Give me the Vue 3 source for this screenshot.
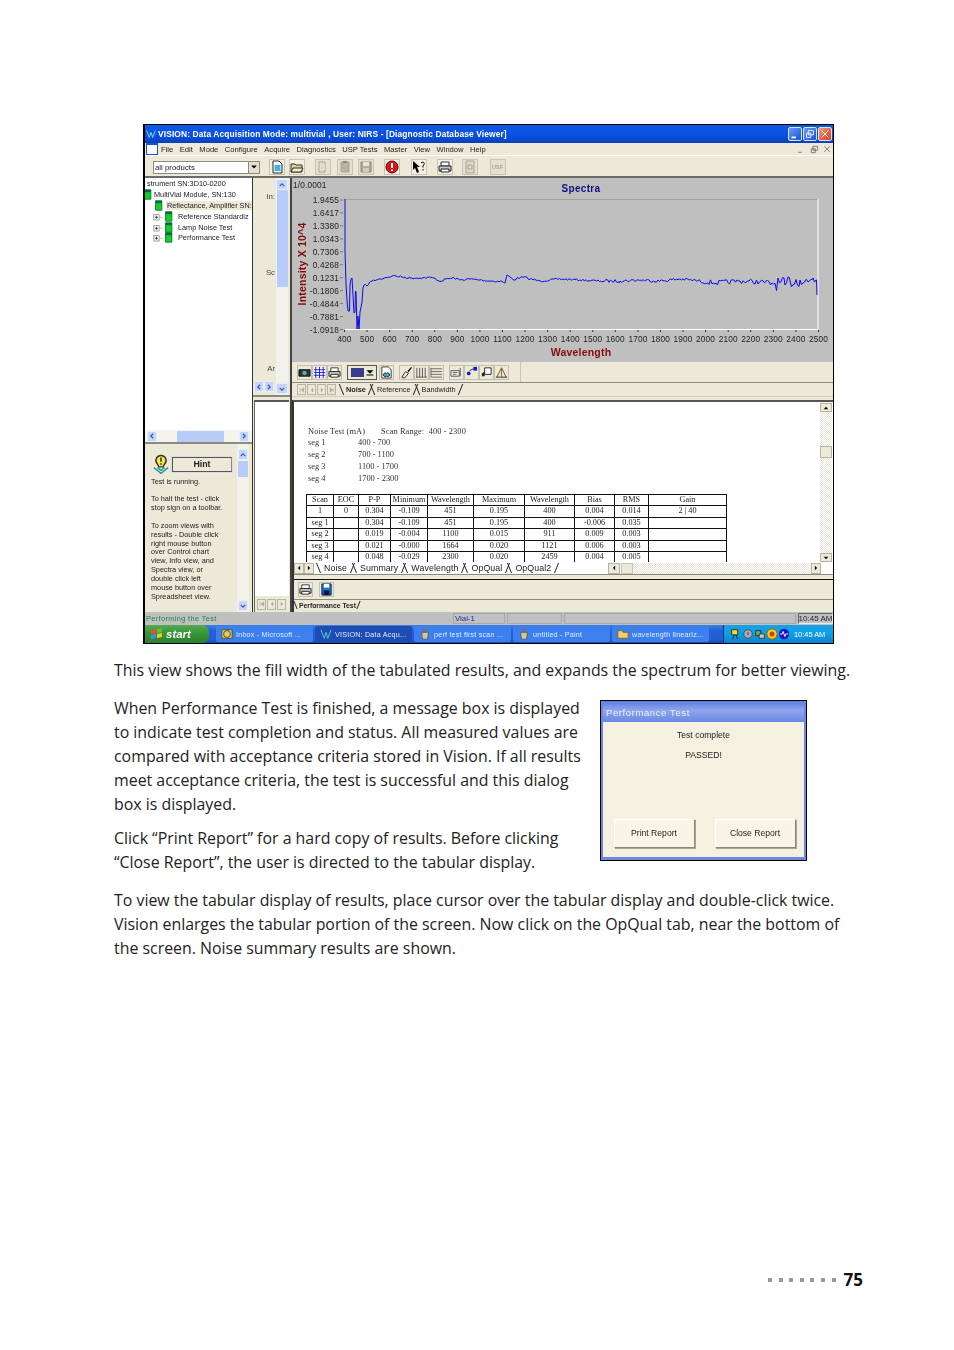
<template>
  <div class="page">
    <!-- screen capture -->
    <div class="shot">
      <div class="title">
        <Icon name="vlogo" class="title-logo" />
        <span class="title-text">VISION: Data Acquisition Mode: multivial , User: NIRS - [Diagnostic Database Viewer]</span>
        <span class="wbtn"><Icon name="min" /></span>
        <span class="wbtn"><Icon name="restore" /></span>
        <span class="wbtn close"><Icon name="x" /></span>
      </div>

      <div class="menu">
        <span class="menu-doc"></span>
        <span v-for="m in menus" :key="m" class="menu-item">{{ m }}</span>
        <span class="mdi">
          <Icon name="mdimin" /><Icon name="mdirest" /><Icon name="mdix" />
        </span>
      </div>

      <div class="toolbar">
        <div class="combo"><span>all products</span><i class="combo-btn"><Icon name="down" /></i></div>
        <div class="tgroup g1"><span v-for="t in ['doc', 'open']" :key="t" class="tb"><Icon :name="t" /></span></div>
        <div class="tgroup g2"><span v-for="t in ['copy', 'paste', 'save']" :key="t" class="tb off"><Icon :name="t" /></span></div>
        <div class="tgroup g3"><span v-for="t in ['stop', 'helpa', 'printer']" :key="t" class="tb"><Icon :name="t" /></span></div>
        <div class="tgroup g4"><span class="tb off"><Icon name="report" /></span><span class="tb off usf">USF</span></div>
      </div>

      <div class="body">
        <!-- left column -->
        <div class="left">
          <div class="tree">
            <div class="tree-row">strument SN:3D10-0200</div>
            <div class="tree-row r1"><Icon name="cyl" />MultiVial Module, SN:130</div>
            <div class="tree-row r2"><Icon name="cyl" /><span class="sel">Reflectance, Amplifier SN:</span></div>
            <div v-for="n in treeItems" :key="n" class="tree-row r3">
              <Icon name="plus" /><Icon name="cyl" />{{ n }}
            </div>
          </div>
          <div class="hscroll">
            <span class="sb"><Icon name="chevL" /></span>
            <span class="hthumb"></span>
            <span class="sb"><Icon name="chevR" /></span>
          </div>
          <div class="hint">
            <div class="hint-main">
              <div class="hint-top">
                <Icon name="bulb" class="bulb" />
                <span class="hint-btn">Hint</span>
              </div>
              <p>Test is running.</p>
              <p>To halt the test - click<br>stop sign on a toolbar.</p>
              <p>To zoom views with<br>results - Double click<br>right mouse button<br>over Control chart<br>view, Info view, and<br>Spectra view, or<br>double click left<br>mouse button over<br>Spreadsheet view.</p>
            </div>
            <div class="vbar">
              <span class="sb"><Icon name="chevU" /></span>
              <span class="vthumb"></span>
              <span class="sb end"><Icon name="chevD" /></span>
            </div>
          </div>
        </div>

        <!-- middle column -->
        <div class="mid">
          <div class="mid-top">
            <div class="mid-labels">
              <span class="l1">In:</span>
              <span class="l2">Sc</span>
              <span class="l3">Ar</span>
              <div class="mid-nav">
                <span class="sb"><Icon name="chevL" /></span>
                <span class="sb"><Icon name="chevR" /></span>
              </div>
            </div>
            <div class="vbar midbar">
              <span class="sb"><Icon name="chevU" /></span>
              <span class="midthumb"></span>
              <span class="sb end"><Icon name="chevD" /></span>
            </div>
          </div>
          <div class="mid-bottom">
            <div class="mid-white"></div>
            <div class="mid-foot">
              <span v-for="t in ['first', 'prev', 'next']" :key="t" class="nav"><Icon :name="t" /></span>
            </div>
          </div>
        </div>

        <!-- right column -->
        <div class="right">
          <div class="right-top">
            <svg class="chart" viewBox="292 178 541 184" width="541" height="184">
              <rect x="292" y="178" width="541" height="184" fill="#bfbfbf" />
              <path d="M345 199.5H818" fill="none" stroke="#a8a494" />
              <path d="M818 199V329.5H345" fill="none" stroke="#fff" />
              <path v-for="t in yTicks" :key="t.label" :d="`M340 ${t.y}h3`" stroke="#777" />
              <path v-for="t in xTicks" :key="t.label" :d="`M${t.x} 330v2`" stroke="#333" />
              <text x="293" y="188" class="ax">1/0.0001</text>
              <text x="581" y="192" class="ttl" text-anchor="middle">Spectra</text>
              <text v-for="t in yTicks" :key="t.label" x="339" :y="t.y + 3" class="ax" text-anchor="end">{{ t.label }}</text>
              <text v-for="t in xTicks" :key="t.label" :x="t.x" y="342" class="ax" text-anchor="middle">{{ t.label }}</text>
              <text x="581" y="356" class="axt" text-anchor="middle">Wavelength</text>
              <text x="306" y="264" class="axt" text-anchor="middle" transform="rotate(-90 306 264)">Intensity X 10^4</text>
              <path :d="curve" fill="none" stroke="#0a0af0" stroke-width="1" />
            </svg>
            <div class="chart-tools">
              <div class="tgroup c1"><span v-for="t in ['camera', 'gridb', 'printer']" :key="t" class="tb2"><Icon :name="t" /></span></div>
              <div class="swatch-box"><i class="swatch"></i><Icon name="downbar" /></div>
              <span class="tb2 c2"><Icon name="preview" /></span>
              <div class="tgroup c3"><span v-for="t in ['brush', 'vlines', 'hlines']" :key="t" class="tb2"><Icon :name="t" /></span></div>
              <div class="tgroup c4"><span v-for="t in ['label', 'dots', 'zoom', 'peak']" :key="t" class="tb2"><Icon :name="t" /></span></div>
            </div>
            <div class="tabs-row">
              <span v-for="t in ['first', 'prev', 'next', 'last']" :key="t" class="nav"><Icon :name="t" /></span>
              <div class="tabs small">
                <span class="tab on">Noise</span><span class="tab">Reference</span><span class="tab">Bandwidth</span>
              </div>
            </div>
          </div>

          <div class="right-bottom">
            <div class="sheet">
              <div class="sheet-main">
                <div class="noise-head"><span>Noise Test (mA)</span><span>Scan Range:&nbsp; 400 - 2300</span></div>
                <div v-for="s in segs" :key="s[0]" class="seg"><span>{{ s[0] }}</span><span>{{ s[1] }}</span></div>
                <table class="grid">
                  <colgroup>
                    <col v-for="(w, i) in colWidths" :key="i" :width="w" />
                  </colgroup>
                  <tbody>
                    <tr v-for="(row, i) in rows" :key="i">
                      <td v-for="(c, j) in row" :key="j">{{ c }}</td>
                    </tr>
                  </tbody>
                </table>
              </div>
              <div class="sheet-bar">
                <span class="sq"><Icon name="up" /></span>
                <span class="sheet-thumb"></span>
                <span class="sq end"><Icon name="down" /></span>
              </div>
            </div>
            <div class="sheet-tabs">
              <span class="mini"><Icon name="left" /></span>
              <span class="mini"><Icon name="right" /></span>
              <div class="tabs large">
                <span class="tab">Noise</span><span class="tab">Summary</span><span class="tab">Wavelength</span><span class="tab">OpQual</span><span class="tab">OpQual2</span>
              </div>
              <div class="sheet-hbar">
                <span class="mini wide"><Icon name="left" /></span>
                <span class="hbar-thumb"></span>
                <span class="hbar-track"></span>
                <span class="mini"><Icon name="right" /></span>
              </div>
            </div>
            <div class="rep-tools">
              <span class="tb2"><Icon name="printer" /></span>
              <span class="tb2"><Icon name="floppy" /></span>
            </div>
            <div class="rep-tabs">
              <div class="tabs small rep"><span class="tab on">Performance Test</span></div>
            </div>
          </div>
        </div>
      </div>

      <div class="status">
        <span class="status-msg">Performing the Test</span>
        <span class="cell vial">Vial-1</span>
        <span class="cell w55"></span>
        <span class="cell grow"></span>
        <span class="cell clock">10:45 AM</span>
      </div>

      <div class="taskbar">
        <div class="start"><Icon name="flag" /><span>start</span></div>
        <div class="tasks">
          <div v-for="t in tasks" :key="t.label" class="task" :class="{ active: t.active }">
            <Icon :name="t.icon" /><span>{{ t.label }}</span>
          </div>
        </div>
        <div class="tray">
          <Icon v-for="t in ['tr1', 'tr2', 'tr3', 'tr4', 'tr5']" :key="t" :name="t" />
          <span>10:45 AM</span>
        </div>
      </div>
    </div>

    <!-- manual text -->
    <div class="text">
      <p>This view shows the fill width of the tabulated results, and expands the spectrum for better viewing.</p>
      <div class="with-dialog">
        <div class="with-dialog-text">
          <p>When Performance Test is finished, a message box is displayed to indicate test completion and status. All measured values are compared with acceptance criteria stored in Vision. If all results meet acceptance criteria, the test is successful and this dialog box is displayed.</p>
          <p>Click “Print Report” for a hard copy of results. Before clicking “Close Report”, the user is directed to the tabular display.</p>
        </div>
        <div class="dialog">
          <div class="dialog-title">Performance Test</div>
          <div class="dialog-body">
            <div class="dialog-msg">Test complete</div>
            <div class="dialog-msg">PASSED!</div>
            <div class="dialog-btns">
              <span class="dbtn">Print Report</span>
              <span class="dbtn">Close Report</span>
            </div>
          </div>
        </div>
      </div>
      <p>To view the tabular display of results, place cursor over the tabular display and double-click twice. Vision enlarges the tabular portion of the screen. Now click on the OpQual tab, near the bottom of the screen. Noise summary results are shown.</p>
    </div>

    <div class="footer">
      <span class="dots"><i v-for="n in 7" :key="n"></i></span>
      <span class="pageno">75</span>
    </div>
  </div>
</template>

<script setup>
import { h } from 'vue'

// every icon is a list of [path, fill, stroke] on a 14x14 grid
const icons = {
  vlogo: [['M2 3l3 8 2-6 2 6 3-8', 'none', '#8ce8e0']],
  min: [['M3 10h5v2H3z', '#fff']],
  restore: [['M5 3h6v5H5zM3 6h5v5H3z', 'none', '#fff']],
  x: [['M3 3l8 8M11 3l-8 8', 'none', '#fff']],
  mdimin: [['M3 10h4v1H3z', '#666']],
  mdirest: [['M5 3h6v5H5zM3 6h5v5H3z', 'none', '#666']],
  mdix: [['M3 3l7 7M10 3l-7 7', 'none', '#666']],
  down: [['M3 5h8l-4 4z', '#000']],
  up: [['M3 9h8L7 5z', '#000']],
  left: [['M9 3v8L5 7z', '#000']],
  right: [['M5 3v8l4-4z', '#000']],
  downbar: [['M3 5h8l-4 4zM3 10h8v1H3z', '#000']],
  doc: [['M3 1h6l3 3v9H3z', '#fff', '#223'], ['M4.5 5h6v6h-6z', '#38b8e0']],
  open: [['M1 4h4l1 1h6v7H1z', '#d8d0a0', '#333'], ['M3 8h10l-2 4H1z', '#f4eeb0', '#333']],
  copy: [['M3 2h6v10H3z', 'none', '#a8a498'], ['M5 4h4v6H5z', '#e0dccc']],
  paste: [['M3 2h8v10H3z', '#b8b4a4', '#a8a498'], ['M5 1h4v2H5z', '#8c8878']],
  save: [['M2 2h10v10H2z', '#b0ac9c', '#8c8878'], ['M4 2h6v4H4z', '#e8e4d4'], ['M4 8h6v4H4z', '#d0ccbc']],
  stop: [['M7 1a6 6 0 1 1 0 12A6 6 0 1 1 7 1z', '#d81818', '#600'], ['M6 3h2v5H6zM6 9.5h2V11H6z', '#fff']],
  helpa: [['M1 1l7 6H5l2 5-2 1-2-5-2 2z', '#000'], ['M9 3c2-2 4 0 3 1.500L11 6v1.500M11 9v1.500', 'none', '#000']],
  printer: [['M3 2h8v4H3z', '#fff', '#333'], ['M1 6h12v5H1z', '#c8c8c8', '#222'], ['M3 9h8v3H3z', '#fff', '#222']],
  report: [['M3 1h8v12H3z', '#dcd8c8', '#a8a498'], ['M5 5h4v4H5z', 'none', '#a8a498']],
  cyl: [['M2 1h8v12H2z', '#10d020', '#063'], ['M2 1h8v3H2z', '#064']],
  plus: [['M1.500 4.500h7v7h-7z', '#fff', '#888'], ['M3 8h4M5 6v4', 'none', '#223'], ['M9 8h4', 'none', '#aaa']],
  chevU: [['M3 9l4-4 4 4', 'none', '#3a5aa8']],
  chevD: [['M3 5l4 4 4-4', 'none', '#3a5aa8']],
  chevL: [['M9 3L5 7l4 4', 'none', '#3a5aa8']],
  chevR: [['M5 3l4 4-4 4', 'none', '#3a5aa8']],
  bulb: [['M7 1a3.500 3.500 0 0 1 2.500 6l-1 2h-3l-1-2A3.500 3.500 0 0 1 7 1z', '#f8e850', '#333'], ['M6.500 2.500h1v3h-1zM6.500 6.500h1v1h-1z', '#222'], ['M2 9.500l5 4 5-4M4.500 9.500L7 11.500l2.500-2', 'none', '#2a9a98']],
  first: [['M4 3v8M10 3v8L6 7z', '#a8a498', '#a8a498']],
  prev: [['M9 3v8L5 7z', '#a8a498']],
  next: [['M5 3v8l4-4z', '#a8a498']],
  last: [['M10 3v8M4 3v8l4-4z', '#a8a498', '#a8a498']],
  camera: [['M1 4h12v7H1z', '#333', '#111'], ['M7 5a2.500 2.500 0 1 1 0 5 2.500 2.500 0 1 1 0-5z', '#40b0b0']],
  gridb: [['M1 2h12v10H1z', '#fff'], ['M1 4h12M1 7h12M1 10h12M3 1v12M7 1v12M11 1v12', 'none', '#1818f0']],
  preview: [['M2 1h7l3 3v9H2z', '#fff', '#333'], ['M7 8a2 2 0 1 1 0 3 2 2 0 1 1 0-3z', '#40b0d0', '#222']],
  brush: [['M2 12l4-6 3 2-4 5z', '#eee', '#222'], ['M8 5l4-4 1 1-4 5z', '#222']],
  vlines: [['M2 2v10M5 2v10M8 2v10M11 2v10M1 12h12', 'none', '#555']],
  hlines: [['M1 2v10M1 3h12M1 6h12M1 9h12M1 12h12', 'none', '#666']],
  label: [['M1 5h9v6H1z', '#eee', '#555'], ['M11 2v9', 'none', '#555'], ['M3 7h5M3 9h4', 'none', '#666']],
  dots: [['M9 1h4v4H9z', '#1818d0'], ['M2 8a2 2 0 1 1 4 0 2 2 0 1 1-4 0z', '#1818d0'], ['M5 5l4-2', 'none', '#222']],
  zoom: [['M5 2h7v7H5z', '#fff', '#222'], ['M2 8l3-2v5H2z', '#222']],
  peak: [['M1 12h12', 'none', '#222'], ['M2 12l5-10 5 10', 'none', '#c02020'], ['M7 2v10', 'none', '#20a020']],
  floppy: [['M2 1h10v12H2z', '#1870c8', '#123'], ['M4 1h6v4H4z', '#fff'], ['M4 8h6v5H4z', '#101058']],
  flag: [['M1 3l5-1v4l-5 1z', '#f05030'], ['M7 2l5-1v4l-5 1z', '#60c040'], ['M1 8l5-1v4l-5 1z', '#4090f0'], ['M7 7l5-1v4l-5 1z', '#f8c820']],
  envelope: [['M1 2h12v10H1z', '#e8c860', '#405030'], ['M7 3a4 4 0 1 1 0 8 4 4 0 1 1 0-8z', 'none', '#305030']],
  vision: [['M1 2l4 10 2-7 2 7 4-10', 'none', '#60e0e0']],
  jar: [['M3 5h8l-1 8H4z', '#d0c8a0', '#555'], ['M5 1l1 4M7 1v4', 'none', '#e04030'], ['M9 1L8 5', 'none', '#30a030']],
  folder: [['M1 3h5l1 2h6v7H1z', '#f0d070', '#806020']],
  tr1: [['M2 2h7v6H2z', '#f8e020', '#222'], ['M5 8l-2 5M7 8l2 5', 'none', '#222']],
  tr2: [['M7 2a5 5 0 1 1 0 10 5 5 0 1 1 0-10z', '#a8a8b8', '#444'], ['M7 5v3', 'none', '#222']],
  tr3: [['M2 3h6v6H2z', '#60b060', '#222'], ['M6 7h6v5H6z', '#c0d0c8', '#333']],
  tr4: [['M7 1a6 6 0 1 1 0 12 6 6 0 1 1 0-12z', '#f8d020', '#806000'], ['M7 4a3 3 0 1 1 0 6 3 3 0 1 1 0-6z', '#d84010']],
  tr5: [['M7 1a6 6 0 1 1 0 12 6 6 0 1 1 0-12z', '#1818c0'], ['M2 7h3l1-3 2 6 1-3h3', 'none', '#fff']],
}

const Icon = (props) =>
  h('svg', { viewBox: '0 0 14 14', class: 'ico' },
    (icons[props.name] || []).map((p) => h('path', { d: p[0], fill: p[1], stroke: p[2] || 'none' })))
Icon.props = ['name']

const menus = ['File', 'Edit', 'Mode', 'Configure', 'Acquire', 'Diagnostics', 'USP Tests', 'Master', 'View', 'Window', 'Help']
const treeItems = ['Reference Standardiz', 'Lamp Noise Test', 'Performance Test']

const segs = [['seg 1', '400 -  700'], ['seg 2', '700 - 1100'], ['seg 3', '1100 - 1700'], ['seg 4', '1700 - 2300']]
const colWidths = [27, 25, 32, 37, 46, 51, 50, 40, 34, 78]
const rows = [
  ['Scan', 'EOC', 'P-P', 'Minimum', 'Wavelength', 'Maximum', 'Wavelength', 'Bias', 'RMS', 'Gain'],
  ['1', '0', '0.304', '-0.109', '451', '0.195', '400', '0.004', '0.014', '2 | 40'],
  ['seg 1', '', '0.304', '-0.109', '451', '0.195', '400', '-0.006', '0.035', ''],
  ['seg 2', '', '0.019', '-0.004', '1100', '0.015', '911', '0.009', '0.003', ''],
  ['seg 3', '', '0.021', '-0.000', '1664', '0.020', '1121', '0.006', '0.003', ''],
  ['seg 4', '', '0.048', '-0.029', '2300', '0.020', '2459', '0.004', '0.005', ''],
]

const tasks = [
  { label: 'Inbox - Microsoft ...', icon: 'envelope' },
  { label: 'VISION: Data Acqu...', icon: 'vision', active: true },
  { label: 'perf test first scan ...', icon: 'jar' },
  { label: 'untitled - Paint', icon: 'jar' },
  { label: 'wavelength lineariz...', icon: 'folder' },
]

// chart axes
const yLabels = ['1.9455', '1.6417', '1.3380', '1.0343', '0.7306', '0.4268', '0.1231', '-0.1806', '-0.4844', '-0.7881', '-1.0918']
const yTicks = yLabels.map((label, i) => ({ label, y: 200 + i * 12.95 }))
const xTicks = []
for (let i = 0; i <= 21; i++) {
  xTicks.push({ label: String(400 + i * 100), x: 344.5 + i * 22.57 })
}

// spectrum: hand-read anchors, plus noise that grows toward the long-wave end
const head = [[345, 199], [345, 250], [346, 284], [347, 300], [348, 311], [349.500, 311], [350, 285], [351, 279], [352, 278], [353, 295], [354, 313], [355, 312], [355.500, 291], [356, 292], [357, 329], [358, 316], [359, 329], [360, 312], [362, 302], [363, 288], [364, 285]]
const anchors = [[364, 285], [367, 286], [369, 283], [372, 281], [376, 280], [380, 279], [386, 277.500], [392, 276], [396, 276], [402, 277], [410, 278], [420, 278], [428, 277.500], [434, 278], [440, 281.500], [446, 279], [454, 278], [460, 280], [470, 279], [480, 280], [490, 281], [502, 281.500], [505, 283], [507, 275], [510, 277], [514, 280], [518, 278], [524, 277], [530, 279], [540, 281], [560, 279], [580, 280], [600, 281], [620, 281], [640, 280], [660, 281], [680, 279], [700, 281], [716, 283], [740, 281], [760, 282], [772, 283], [785, 285], [790, 281], [800, 280], [808, 282], [813, 278], [816, 280]]

let seed = 7
const rnd = () => {
  seed = (seed * 16807) % 2147483647
  return seed / 2147483647 - 0.5
}
const noiseAt = (x) => (x < 600 ? 2 : x < 700 ? 3 : x < 770 ? 5 : 14)

const pts = [...head]
for (let i = 1; i < anchors.length; i++) {
  const [x0, y0] = anchors[i - 1]
  const [x1, y1] = anchors[i]
  for (let x = x0 + 1.5; x < x1; x += 1.5) {
    const t = (x - x0) / (x1 - x0)
    pts.push([x, y0 + (y1 - y0) * t + rnd() * noiseAt(x)])
  }
  pts.push([x1, y1])
}
pts.push([816.500, 280], [817, 295])
const curve = 'M' + pts.map((p) => p[0].toFixed(1) + ' ' + p[1].toFixed(1)).join('L')
</script>

<style>
body {
  margin: 0;
  background: #fff;
}
</style>

<style scoped>
.page {
  width: 954px;
  height: 1350px;
  padding-top: 124px;
  box-sizing: border-box;
  display: flex;
  flex-direction: column;
  font-family: "Open Sans", "Noto Sans", sans-serif;
  color: #222;
  overflow: hidden;
}
:deep(.ico) {
  width: 14px;
  height: 14px;
  flex: none;
  display: block;
}

/* screenshot */
.shot {
  width: 691px;
  height: 520px;
  margin-left: 143px;
  padding: 1px 1px 1px 2px;
  box-sizing: border-box;
  background: #000;
  display: flex;
  flex-direction: column;
  font-family: "Liberation Sans", sans-serif;
  font-size: 7.8px;
  color: #222;
  flex: none;
  filter: blur(0.35px);
}
.title {
  height: 18px;
  flex: none;
  background: linear-gradient(#0a5ae0, #0a55e4 35%, #0a4cd8 70%, #0a40b8);
  display: flex;
  align-items: center;
  color: #fff;
}
.title :deep(.title-logo) {
  width: 12px;
  height: 12px;
  margin-right: 1px;
}
.title-text {
  flex: 1;
  font-weight: bold;
  font-size: 8.400px;
  letter-spacing: 0.13px;
}
.wbtn {
  width: 14px;
  height: 14px;
  margin-left: 1px;
  background: linear-gradient(135deg, #6a9cf8, #1c50d0);
  border: 1px solid #d8e4f8;
  box-sizing: border-box;
  border-radius: 2px;
  display: flex;
  align-items: center;
  justify-content: center;
}
.wbtn :deep(.ico) { width: 12px; height: 12px; }
.wbtn.close {
  background: linear-gradient(135deg, #f0a080, #d83818);
  margin-right: 1px;
}
.menu {
  height: 13px;
  flex: none;
  background: #ece9d8;
  border-bottom: 1px solid #fff;
  box-sizing: border-box;
  display: flex;
  align-items: center;
}
.menu-doc {
  width: 10px;
  height: 9px;
  background: #fff;
  border: 1px solid #2050c8;
  border-top-width: 2px;
  margin: 0 3px 0 1px;
}
.menu-item {
  margin-right: 6.500px;
  font-size: 7.600px;
}
.mdi {
  margin-left: auto;
  display: flex;
}
.mdi :deep(.ico) { width: 11px; height: 11px; margin-left: 2px; }
.toolbar {
  height: 22px;
  flex: none;
  background: #ece9d8;
  border-bottom: 2px solid #6c6c64;
  box-sizing: border-box;
  display: flex;
  align-items: center;
  padding: 2px 0 0 8px;
}
.combo {
  width: 107px;
  height: 13px;
  background: #fff;
  border: 1px solid #8a8a80;
  box-sizing: border-box;
  display: flex;
  align-items: center;
  justify-content: space-between;
  padding-left: 1px;
  font-size: 7.800px;
}
.combo-btn {
  width: 10px;
  height: 11px;
  background: #e4e0d0;
  border-left: 1px solid #888;
  display: flex;
  align-items: center;
  justify-content: center;
}
.combo-btn :deep(.ico) { width: 10px; height: 10px; }
.tgroup { display: flex; }
.tb {
  width: 16px;
  height: 16px;
  border: 1px solid #c8c4b0;
  background: #f2f0e4;
  box-sizing: border-box;
  display: flex;
  align-items: center;
  justify-content: center;
}
.tb.off { background: #e4e1d2; }
.tb.usf {
  font-size: 5.500px;
  font-weight: bold;
  color: #a8a498;
}
.g1 { gap: 4px; margin-left: 9px; }
.g2 { gap: 5.500px; margin-left: 10px; }
.g3 { gap: 10.500px; margin-left: 10px; }
.g4 { gap: 11.500px; margin-left: 9px; }

.body {
  height: 434px;
  flex: none;
  display: grid;
  grid-template-columns: 108px 39px 541px;
  background: #ece9d8;
}
.left {
  display: flex;
  flex-direction: column;
  border-right: 1px solid #333;
}
.tree {
  height: 252px;
  flex: none;
  background: #fff;
  padding-top: 0.500px;
  box-sizing: border-box;
  overflow: hidden;
}
.tree-row {
  height: 10.800px;
  display: flex;
  align-items: center;
  white-space: nowrap;
  padding-left: 2px;
  font-size: 7.300px;
}
.tree-row :deep(.ico) { width: 11px; height: 11px; }
.r1 { padding-left: 0; margin-left: -2px; }
.r2 { padding-left: 9px; }
.r2 .sel { background: #ece9d8; padding: 0 1px; margin-left: 1px; }
.r3 { padding-left: 7px; gap: 1px; }
.r3 :deep(.ico:first-child) { width: 12px; }
.r3 :deep(.ico:nth-child(2)) { margin: 0 2px 0 -1px; }
.sb {
  width: 10px;
  height: 11px;
  background: #c6d6f8;
  border: 1px solid #e8eefc;
  box-sizing: border-box;
  border-radius: 1px;
  display: flex;
  align-items: center;
  justify-content: center;
  flex: none;
}
.sb :deep(.ico) { width: 8px; height: 8px; }
.sb :deep(path) { stroke-width: 2.200; }
.hscroll {
  height: 14px;
  flex: none;
  background: #f4f4ec;
  border-bottom: 2px solid #8a8a80;
  box-sizing: border-box;
  display: flex;
  align-items: center;
  padding: 0 3px 0 2px;
}
.hthumb {
  width: 48px;
  height: 11px;
  background: #b8ccf8;
  margin: 0 15px 0 20px;
}
.hint {
  flex: 1;
  display: flex;
  overflow: hidden;
}
.hint-main {
  flex: 1;
  padding-left: 6px;
  font-size: 7.300px;
  line-height: 8.900px;
}
.hint-top {
  display: flex;
  align-items: center;
  height: 24px;
  margin-top: 8px;
}
.hint-top .bulb {
  width: 20px;
  height: 24px;
  margin-right: 1px;
}
.hint-btn {
  width: 60px;
  height: 15px;
  border: 1px solid #555;
  border-right-color: #888;
  outline: 1px solid #ddd;
  box-sizing: border-box;
  text-align: center;
  font-weight: bold;
  font-size: 8.800px;
  line-height: 13px;
}
.hint-main p {
  margin: 0 0 9px;
}
.hint-top + p { margin-top: 2px; margin-bottom: 8px; }
.vbar {
  width: 12px;
  display: flex;
  flex-direction: column;
  align-items: center;
  background: #f2f2ea;
  margin-right: 3px;
  padding-top: 5px;
}
.vthumb {
  width: 10px;
  height: 16px;
  margin-top: 1px;
  background: #b8ccf8;
}
.vbar .end { margin-top: auto; margin-bottom: 1px; }

.mid {
  display: flex;
  flex-direction: column;
  border-right: 2px solid #444;
}
.mid-top {
  height: 219px;
  flex: none;
  display: flex;
  border-bottom: 2px solid #8a8a80;
  box-sizing: border-box;
}
.mid-labels {
  flex: 1;
  display: flex;
  flex-direction: column;
  font-size: 7.800px;
  color: #444;
  align-items: flex-end;
  padding-right: 1px;
}
.l1 { margin-top: 14px; }
.l2 { margin-top: 67px; }
.l3 { margin-top: 87px; }
.mid-nav {
  margin-top: auto;
  margin-bottom: 3px;
  align-self: flex-start;
  margin-left: 1px;
  display: flex;
}
.midbar {
  margin: 0 2px 0 0;
  padding-top: 1px;
  width: 12px;
}
.midthumb {
  width: 11px;
  height: 97px;
  background: #b8ccf8;
}
.midbar .sb { width: 12px; }
.mid-bottom {
  flex: 1;
  margin: 3px 1px 0;
  border-top: 2px solid #555;
  border-left: 1px solid #666;
  display: flex;
  flex-direction: column;
}
.mid-white {
  flex: 1;
  background: #fff;
}
.mid-foot {
  height: 16px;
  display: flex;
  align-items: center;
  gap: 1px;
  padding-left: 2px;
}
.nav {
  width: 9px;
  height: 11px;
  background: #ece9d8;
  border: 1px solid #b8b4a4;
  box-sizing: border-box;
  display: flex;
  align-items: center;
  justify-content: center;
}
.nav :deep(.ico) { width: 8px; height: 8px; }

.right {
  display: flex;
  flex-direction: column;
  min-width: 0;
}
.right-top {
  height: 219px;
  flex: none;
  display: flex;
  flex-direction: column;
}
.chart { display: block; flex: none; }
.ax { font: 8.300px "Liberation Sans", sans-serif; fill: #222; letter-spacing: 0.15px; }
.ttl { font: bold 10px "Liberation Sans", sans-serif; fill: #10107c; letter-spacing: 0.3px; }
.axt { font: bold 10.500px "Liberation Sans", sans-serif; fill: #840c0c; letter-spacing: 0.2px; }
.chart-tools {
  height: 20px;
  flex: none;
  width: 223px;
  padding-left: 5px;
  border-right: 1px solid #c8c4b4;
  display: flex;
  align-items: center;
}
.tb2 {
  width: 15px;
  height: 15px;
  border: 1px solid #c4c0b0;
  box-sizing: border-box;
  display: flex;
  align-items: center;
  justify-content: center;
  flex: none;
}
.tb2 :deep(.ico) { width: 13px; height: 13px; }
.swatch-box {
  width: 30px;
  height: 15px;
  border: 1px solid #555;
  box-sizing: border-box;
  display: flex;
  align-items: center;
  margin-left: 5px;
  padding-left: 3px;
}
.swatch-box :deep(.ico) { width: 12px; height: 12px; }
.swatch { width: 15px; height: 9px; background: #3c3c8c; }
.c2 { margin-left: 2px; }
.c3 { margin-left: 5px; }
.c4 { margin-left: 5px; }
.tabs-row {
  flex: 1;
  display: flex;
  align-items: center;
  gap: 1px;
  padding-left: 5px;
  border-top: 1px solid #8a8a80;
  border-bottom: 1px solid #ccc;
}
.tabs {
  display: flex;
  align-items: stretch;
  height: 100%;
}
.tab {
  position: relative;
  padding: 0 6px 0 7px;
  white-space: nowrap;
  display: flex;
  align-items: center;
}
/* slanted tab edges: \ label / */
.tab::before,
.tab::after {
  content: "";
  position: absolute;
  top: 1px;
  bottom: 1px;
  width: 1px;
  background: #222;
}
.tab::before { left: 1px; transform: skewX(22deg); }
.tab::after { right: 0; transform: skewX(-22deg); }
.tabs.small { font-size: 7.300px; margin-left: 3px; }
.tabs.small .tab { padding: 0 5px 0 6px; }
.tabs.small .tab.on { font-weight: bold; }
.tabs.large { font-size: 8.800px; letter-spacing: 0.1px; margin-left: 3px; }
.tabs.rep { font-size: 6.800px; margin-left: -2px; height: 10px; }
.tabs.rep .tab { padding: 0 3px 0 5px; }

.right-bottom {
  flex: 1;
  margin-top: 3px;
  border-top: 2px solid #555;
  border-left: 2px solid #333;
  display: flex;
  flex-direction: column;
  min-height: 0;
}
.sheet {
  height: 160px;
  flex: none;
  background: #fff;
  display: flex;
  overflow: hidden;
}
.sheet-main {
  flex: 1;
  padding: 23px 0 0 14px;
  font-family: "Liberation Serif", serif;
  font-size: 8.400px;
  color: #333;
}
.noise-head {
  height: 12px;
  display: flex;
  gap: 16px;
  align-items: center;
  letter-spacing: 0.1px;
}
.seg {
  height: 11.800px;
  display: flex;
  align-items: center;
}
.seg span:first-child { width: 50px; }
.grid {
  border-collapse: collapse;
  table-layout: fixed;
  width: 420px;
  margin: 9.500px 0 0 -2px;
  color: #222;
}
.grid td {
  border: 1px solid #111;
  height: 10.500px;
  padding: 0;
  text-align: center;
  white-space: nowrap;
  overflow: hidden;
  line-height: 10.500px;
  font-size: 8.200px;
}
.sheet-bar {
  width: 12px;
  background: repeating-conic-gradient(#e8e4d8 0 25%, #fff 0 50%) 0 0 / 2px 2px;
  display: flex;
  flex-direction: column;
  margin-right: 1px;
  padding-top: 1px;
}
.sq {
  height: 9px;
  background: #ece9d8;
  border: 1px solid #b8b4a4;
  box-sizing: border-box;
  display: flex;
  align-items: center;
  justify-content: center;
  flex: none;
}
.sq :deep(.ico) { width: 8px; height: 8px; }
.sheet-thumb {
  height: 12px;
  margin-top: 34px;
  background: #ece9d8;
  border: 1px solid #b8b4a4;
  box-sizing: border-box;
}
.sq.end { margin-top: auto; }
.sheet-tabs {
  height: 12px;
  flex: none;
  display: flex;
  align-items: center;
  background: #fff;
  border-bottom: 1px solid #8a8a80;
}
.mini {
  width: 10px;
  height: 11px;
  background: #ece9d8;
  border: 1px solid #b8b4a4;
  box-sizing: border-box;
  display: flex;
  align-items: center;
  justify-content: center;
  flex: none;
}
.mini.wide { width: 12px; }
.mini :deep(.ico) { width: 8px; height: 8px; }
.sheet-hbar {
  margin-left: auto;
  margin-right: 12px;
  width: 213px;
  display: flex;
  align-items: center;
}
.hbar-thumb {
  width: 12px;
  height: 11px;
  margin-left: 1px;
  background: #ece9d8;
  border: 1px solid #c8c4b4;
  box-sizing: border-box;
}
.hbar-track {
  flex: 1;
  height: 11px;
  background: repeating-conic-gradient(#e8e4d8 0 25%, #fff 0 50%) 0 0 / 2px 2px;
}
.rep-tools {
  height: 19px;
  flex: none;
  margin-top: 4px;
  border-top: 1px solid #111;
  display: flex;
  align-items: center;
  gap: 6px;
  padding-left: 4px;
}
.rep-tabs {
  flex: 1;
  display: flex;
  align-items: flex-start;
  border-top: 1px solid #8a8a80;
  padding-left: 2px;
  min-height: 0;
}

.status {
  height: 13px;
  flex: none;
  background: #c0c0c0;
  display: flex;
  align-items: center;
  gap: 2px;
}
.status-msg {
  width: 305px;
  padding-left: 1px;
  color: #1a8a3c;
  letter-spacing: 0.350px;
  font-size: 7.400px;
}
.cell {
  height: 11px;
  border: 1px solid #a8a8a8;
  box-sizing: border-box;
  display: flex;
  align-items: center;
}
.vial { width: 52px; color: #2030a0; padding-left: 1px; }
.w55 { width: 55px; }
.grow { flex: 1; }
.clock {
  width: 35px;
  border-color: #666 #eee #eee #666;
  font-size: 8px;
  justify-content: center;
  white-space: nowrap;
}
.taskbar {
  height: 18px;
  flex: none;
  background: linear-gradient(#3a80e8, #2460d8 30%, #245cd4 80%, #1c48b0);
  display: flex;
  align-items: stretch;
  color: #e4ecff;
}
.start {
  width: 64px;
  background: linear-gradient(#58a858, #389838 40%, #2c8030);
  border-radius: 0 7px 7px 0;
  display: flex;
  align-items: center;
  gap: 2px;
  padding-left: 5px;
  box-sizing: border-box;
  color: #fff;
  font: italic bold 11.500px "Liberation Sans", sans-serif;
}
.tasks {
  display: flex;
  gap: 2px;
  margin-left: 7px;
  padding: 1px 0;
  flex: 1;
}
.task {
  width: 97px;
  border-radius: 2px;
  background: #3c80f0;
  display: flex;
  align-items: center;
  gap: 3px;
  padding-left: 5px;
  box-sizing: border-box;
  white-space: nowrap;
  overflow: hidden;
  font-size: 7.200px;
  letter-spacing: 0.2px;
}
.task.active { background: #1c4cb4; }
.task :deep(.ico) { width: 12px; height: 12px; }
.tray {
  width: 110px;
  background: linear-gradient(#18a0e8, #10a0e4 50%, #0c80d0);
  border-left: 1px solid #083080;
  display: flex;
  align-items: center;
  padding-left: 6px;
  box-sizing: border-box;
  font-size: 7.400px;
  white-space: nowrap;
  color: #fff;
}
.tray :deep(.ico) { width: 12px; height: 12px; }
.tray span { margin-left: 4px; }

/* manual text */
.text {
  margin: 14px 0 0 114px;
  width: 745px;
  font-size: 15.900px;
  line-height: 24px;
}
.text p {
  margin: 0 0 14px;
}
.with-dialog {
  display: flex;
  justify-content: space-between;
}
.with-dialog-text {
  width: 470px;
}
.with-dialog-text p:first-child {
  margin-bottom: 10px;
}
.dialog {
  width: 207px;
  height: 161px;
  margin: 4px 52px 0 0;
  border: 1px solid #000;
  box-sizing: border-box;
  background: #6a88e0;
  padding: 0 2px 3px;
  display: flex;
  flex-direction: column;
  flex: none;
  font-family: "Liberation Sans", sans-serif;
  filter: blur(0.25px);
}
.dialog-title {
  height: 21px;
  flex: none;
  background: linear-gradient(#5c7ce0, #8ea6ec 45%, #6a88e4);
  color: #eef2ff;
  font-size: 9.500px;
  letter-spacing: 0.600px;
  line-height: 23px;
  padding-left: 3px;
}
.dialog-body {
  flex: 1;
  background: #f5f0e0;
  display: flex;
  flex-direction: column;
  align-items: center;
  padding-top: 7px;
  font-size: 8.600px;
  color: #222;
}
.dialog-msg {
  height: 20px;
  line-height: 12px;
}
.dialog-btns {
  margin-top: auto;
  margin-bottom: 9px;
  padding-left: 2px;
  display: flex;
  gap: 20px;
}
.dbtn {
  width: 81px;
  height: 29px;
  box-sizing: border-box;
  background: #f8f4e6;
  border: 1px solid;
  border-color: #fff #88887a #88887a #fff;
  box-shadow: 1px 1px 0 #a8a498;
  text-align: center;
  line-height: 26px;
}

/* page number */
.footer {
  margin: auto 91px 58px 0;
  display: flex;
  justify-content: flex-end;
  align-items: center;
  gap: 8px;
}
.dots { display: flex; gap: 6.600px; }
.dots i {
  width: 4px;
  height: 4px;
  background: #999;
}
.pageno {
  font-size: 17px;
  font-weight: bold;
  color: #111;
  line-height: 24px;
}
</style>
